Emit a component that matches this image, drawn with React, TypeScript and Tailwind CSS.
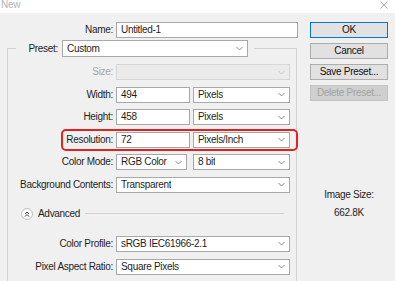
import React from 'react';

const Chevron: React.FC<{ light?: boolean }> = ({ light }) => (
    <svg width="7" height="5" viewBox="0 0 7 5" className="shrink-0">
        <polyline points="0.5,1 3.5,4 6.5,1" fill="none" stroke={light ? '#c4c4c4' : '#8c8c8c'} strokeWidth="1" />
    </svg>
);

const Select: React.FC<{ value?: string; className?: string; disabled?: boolean }> = ({ value, className = '', disabled }) => (
    <div
        className={`h-[16px] flex items-center justify-between pl-[4px] pr-[4px] border ${
            disabled ? 'border-[#d6d6d6] bg-[#ebebeb]' : 'border-[#a8a8a8] bg-white'
        } ${className}`}
    >
        <span className="truncate">{value}</span>
        <Chevron light={disabled} />
    </div>
);

const Input: React.FC<{ value: string; className?: string }> = ({ value, className = '' }) => (
    <div className={`h-[16px] flex items-center pl-[4px] border border-[#a8a8a8] bg-white ${className}`}>
        {value}
    </div>
);

const Row: React.FC<{ label: string; dim?: boolean; children: React.ReactNode; className?: string }> = ({ label, dim, children, className = '' }) => (
    <div className={`flex items-center h-[16px] ${className}`}>
        <div className={`w-[105px] text-right whitespace-nowrap ${dim ? 'text-[#a6a6a6]' : 'text-[#1e1e1e]'}`}>{label}</div>
        <div className="ml-[3px] flex items-center">{children}</div>
    </div>
);

const Button: React.FC<{ label: string; primary?: boolean; disabled?: boolean }> = ({ label, primary, disabled }) => (
    <div
        className={`h-[16px] flex items-center justify-center border ${
            primary
                ? 'border-[#0078d7] bg-[#e1e1e1] text-[#111]'
                : disabled
                ? 'border-[#c4c4c4] bg-[#cfcfcf] text-[#a3a3a3]'
                : 'border-[#adadad] bg-[#e1e1e1] text-[#111]'
        }`}
    >
        {label}
    </div>
);

const App: React.FC = () => {
    return (
        <div className="w-[395px] h-[281px] overflow-hidden bg-[#f0f0f0] font-['Liberation_Sans',Arial,sans-serif] text-[10px] leading-[12px] tracking-[-0.3px] text-[#1e1e1e]">
            {/* title bar */}
            <div className="h-[13px] bg-white flex items-start justify-between pl-[1px] pr-[7px]">
                <span className="text-[10px] leading-[10px] text-[#b4b4b4]">New</span>
                <svg width="8" height="8" viewBox="0 0 8 8" className="mt-[1px]">
                    <path d="M0.5 0.5 L7.5 7.5 M7.5 0.5 L0.5 7.5" stroke="#a0a0a0" strokeWidth="0.9" />
                </svg>
            </div>

            <div className="flex pt-[9px]">
                {/* left side */}
                <div className="w-[310px]">
                    <div className="flex items-center h-[16px]">
                        <div className="w-[113px] text-right">Name:</div>
                        <Input value="Untitled-1" className="ml-[3px] w-[182px]" />
                    </div>

                    <fieldset className="mt-[2px] ml-[7px] w-[290px] border border-[#d2d2d2] pb-[8px]">
                        <legend className="ml-[8px] pr-[6px] flex items-center">
                            <div className="w-[42px] text-right">Preset:</div>
                            <Select value="Custom" className="ml-[4px] w-[186px] h-[17px]" />
                        </legend>

                        <div className="flex flex-col gap-[6.6px] mt-[7px]">
                            <Row label="Size:" dim>
                                <Select disabled className="w-[174px]" />
                            </Row>
                            <Row label="Width:">
                                <Input value="494" className="w-[74px]" />
                                <Select value="Pixels" className="ml-[3px] w-[97px]" />
                            </Row>
                            <Row label="Height:">
                                <Input value="458" className="w-[74px]" />
                                <Select value="Pixels" className="ml-[3px] w-[97px]" />
                            </Row>
                            <div className="relative">
                                <Row label="Resolution:">
                                    <Input value="72" className="w-[74px]" />
                                    <Select value="Pixels/Inch" className="ml-[3px] w-[97px]" />
                                </Row>
                                <div className="absolute left-[53px] -right-[2px] -top-[3px] -bottom-[3px] border-[2.5px] border-[#e3211f] rounded-[5px]" />
                            </div>
                            <Row label="Color Mode:">
                                <Select value="RGB Color" className="w-[71px]" />
                                <Select value="8 bit" className="ml-[6px] w-[97px]" />
                            </Row>
                            <Row label="Background Contents:">
                                <Select value="Transparent" className="w-[174px]" />
                            </Row>
                        </div>

                        <div className="flex items-center h-[16px] mt-[13px] pl-[13px] pr-[12px]">
                            <div className="w-[12px] h-[12px] rounded-full border border-[#c2c2c2] bg-[#fbfbfb] flex items-center justify-center">
                                <svg width="6" height="6" viewBox="0 0 6 6">
                                    <path d="M1 3 L3 1 L5 3 M1 5.5 L3 3.5 L5 5.5" fill="none" stroke="#3a3a3a" strokeWidth="1" />
                                </svg>
                            </div>
                            <span className="ml-[5px]">Advanced</span>
                            <div className="flex-1 h-px bg-[#d2d2d2] ml-[5px]" />
                        </div>

                        <div className="flex flex-col gap-[7px] mt-[14px]">
                            <Row label="Color Profile:">
                                <Select value="sRGB IEC61966-2.1" className="w-[174px]" />
                            </Row>
                            <Row label="Pixel Aspect Ratio:">
                                <Select value="Square Pixels" className="w-[174px]" />
                            </Row>
                        </div>
                    </fieldset>
                </div>

                {/* right side */}
                <div className="w-[78px]">
                    <div className="flex flex-col gap-[5px]">
                        <Button label="OK" primary />
                        <Button label="Cancel" />
                        <Button label="Save Preset..." />
                        <Button label="Delete Preset..." disabled />
                    </div>
                    <div className="mt-[88px] text-center">Image Size:</div>
                    <div className="mt-[6px] text-center">662.8K</div>
                </div>
            </div>
        </div>
    );
};

export default App;
